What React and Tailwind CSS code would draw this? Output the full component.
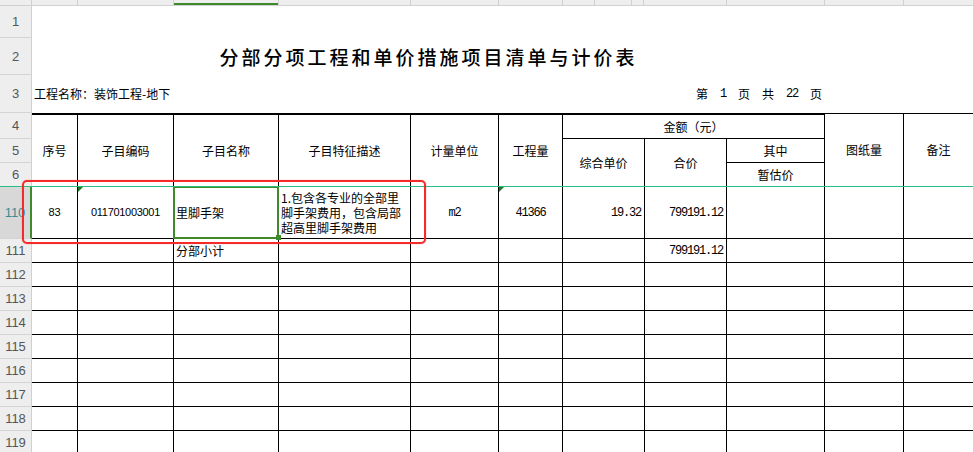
import React from 'react';

// widths of sheet columns A..K (px, border included)
const W = ['w-[46px]', 'w-[96px]', 'w-[105px]', 'w-[132px]', 'w-[88px]', 'w-[64px]', 'w-[82px]', 'w-[82px]', 'w-[98px]', 'w-[79px]'];

// top column-header strip segments
const STRIP = ['w-[46px]', 'w-[96px]', 'w-[105px]', 'w-[132px]', 'w-[88px]', 'w-[64px]', 'w-[32px]', 'w-[37px]', 'w-[12px]', 'w-[83px]', 'w-[98px]', 'w-[79px]'];

const mono = "font-['Liberation_Mono',monospace] text-[12px] tracking-[-1.2px]";
const arial = "font-['Liberation_Sans',sans-serif]";

function RowHead({ label, h, active }) {
  return (
    <div
      className={`${h} w-[32px] shrink-0 flex items-center justify-center border-b border-[#d4d4d4] text-[13px] ${arial} ${
        active
          ? 'bg-[#d8d8d8] text-[#3a8c94] border-r-2 border-r-[#3f8a2a]'
          : 'bg-[#eeeeee] text-[#555] border-r border-r-[#d0d0d0]'
      }`}
    >
      {label}
    </div>
  );
}

function Cell({ w, children, className = '', last }) {
  return (
    <div className={`${w} shrink-0 h-full border-b border-black ${last ? '' : 'border-r'} flex items-center ${className}`}>
      {children}
    </div>
  );
}

function Triangle() {
  return (
    <svg className="absolute left-0 top-0" width="5" height="5" viewBox="0 0 5 5">
      <polygon points="0,0 5,0 0,5" fill="#1f7a22" />
    </svg>
  );
}

function BodyRow({ label, h = 'h-[24px]', cells = {}, active }) {
  return (
    <div className={`flex ${h}`}>
      <RowHead label={label} h={h} active={active} />
      {W.map((w, i) => (
        <Cell key={i} w={w} className={cells[i]?.cls || ''}>
          {cells[i]?.content}
        </Cell>
      ))}
      <div className="flex-1 h-full border-b border-black" />
    </div>
  );
}

export default function App() {
  return (
    <div className="relative w-[973px] h-[452px] overflow-hidden bg-white text-black font-['Noto_Sans_CJK_SC',sans-serif] leading-none">
      {/* column header strip */}
      <div className="flex h-[6px] bg-[#eeeeee] border-b border-[#d0d0d0]">
        <div className="w-[32px] shrink-0 border-r border-[#d0d0d0]" />
        {STRIP.map((w, i) => (
          <div key={i} className={`${w} shrink-0 border-r border-[#d0d0d0] relative`}>
            {i === 2 && <div className="absolute left-0 right-0 bottom-0 h-[2px] bg-[#3f8a2a]" />}
          </div>
        ))}
        <div className="flex-1" />
      </div>

      {/* row 1 */}
      <div className="flex h-[32px]">
        <RowHead label="1" h="h-[32px]" />
        <div className="flex-1" />
      </div>

      {/* row 2 title */}
      <div className="flex h-[37px]">
        <RowHead label="2" h="h-[37px]" />
        <div className="w-[793px] flex items-center justify-center text-[19px] font-medium tracking-[3px]">
          分部分项工程和单价措施项目清单与计价表
        </div>
      </div>

      {/* row 3 */}
      <div className="flex h-[38px]">
        <RowHead label="3" h="h-[38px]" />
        <div className="w-[793px] flex items-center justify-between pl-[2px] pr-[3px] text-[12px]">
          <span>工程名称：装饰工程-地下</span>
          <span className="flex items-center gap-[12px]">
            <span>第</span>
            <span className={mono}>1</span>
            <span>页</span>
            <span>共</span>
            <span className={mono}>22</span>
            <span>页</span>
          </span>
        </div>
      </div>

      {/* header rows 4-6 */}
      <div className="flex h-[74px]">
        <div className="w-[32px] shrink-0 flex flex-col">
          <RowHead label="4" h="h-[26px]" />
          <RowHead label="5" h="h-[24px]" />
          <RowHead label="6" h="h-[24px]" />
        </div>
        {['序号', '子目编码', '子目名称', '子目特征描述', '计量单位', '工程量'].map((t, i) => (
          <div
            key={t}
            className={`${W[i]} shrink-0 h-full border-t-2 border-r border-b border-black flex items-center justify-center text-[12px]`}
          >
            {t}
          </div>
        ))}
        <div className="w-[262px] shrink-0 flex flex-col text-[12px]">
          <div className="h-[26px] border-t-2 border-r border-b border-black flex items-center justify-center">
            金额（元）
          </div>
          <div className="flex flex-1">
            <div className="w-[82px] border-r border-b border-black flex items-center justify-center">综合单价</div>
            <div className="w-[82px] border-r border-b border-black flex items-center justify-center">合价</div>
            <div className="w-[98px] flex flex-col">
              <div className="h-[24px] border-r border-b border-black flex items-center justify-center">其中</div>
              <div className="flex-1 border-r border-b border-black flex items-center justify-center">暂估价</div>
            </div>
          </div>
        </div>
        <div className="w-[79px] shrink-0 h-full border-t border-r border-b border-black flex items-center justify-center text-[12px]">
          图纸量
        </div>
        <div className="flex-1 h-full border-t border-b border-black flex items-center justify-center text-[12px]">
          备注
        </div>
      </div>

      {/* row 110 */}
      <BodyRow
        label="110"
        h="h-[52px]"
        active
        cells={{
          0: { cls: `justify-center text-[11px] ${arial}`, content: '83' },
          1: {
            cls: `justify-center text-[11px] tracking-[-0.3px] ${arial} relative`,
            content: (
              <>
                <Triangle />
                011701003001
              </>
            ),
          },
          2: {
            cls: 'pl-[2px] text-[12px] relative',
            content: (
              <>
                里脚手架
                <div className="absolute left-[-1px] top-[-1px] w-[106px] h-[53px] border-2 border-[#3f8a2a]" />
                <div className="absolute left-[102px] top-[48px] w-[5px] h-[5px] bg-[#3f8a2a]" />
              </>
            ),
          },
          3: {
            cls: 'pl-[2px] text-[12px] leading-[15px]',
            content: (
              <div className="whitespace-nowrap">
                <div>1.包含各专业的全部里</div>
                <div>脚手架费用，包含局部</div>
                <div>超高里脚手架费用</div>
              </div>
            ),
          },
          4: { cls: `justify-center ${mono}`, content: 'm2' },
          5: {
            cls: `justify-center ${mono} relative`,
            content: (
              <>
                <Triangle />
                41366
              </>
            ),
          },
          6: { cls: `justify-end pr-[3px] ${mono}`, content: '19.32' },
          7: { cls: `justify-end pr-[3px] ${mono}`, content: '799191.12' },
        }}
      />

      {/* row 111 */}
      <BodyRow
        label="111"
        cells={{
          2: { cls: 'pl-[2px] text-[12px]', content: '分部小计' },
          7: { cls: `justify-end pr-[3px] ${mono}`, content: '799191.12' },
        }}
      />
      {['112', '113', '114', '115', '116', '117', '118', '119'].map((n) => (
        <BodyRow key={n} label={n} />
      ))}

      {/* freeze pane line */}
      <div className="absolute left-0 right-0 top-[186px] h-px bg-[#2dbd83]" />

      {/* red annotation box */}
      <div className="absolute left-[22px] top-[180px] w-[404px] h-[64px] border-2 border-[#f52a2a] rounded-[5px] shadow-[0_0_1px_#ff5050]" />
    </div>
  );
}
